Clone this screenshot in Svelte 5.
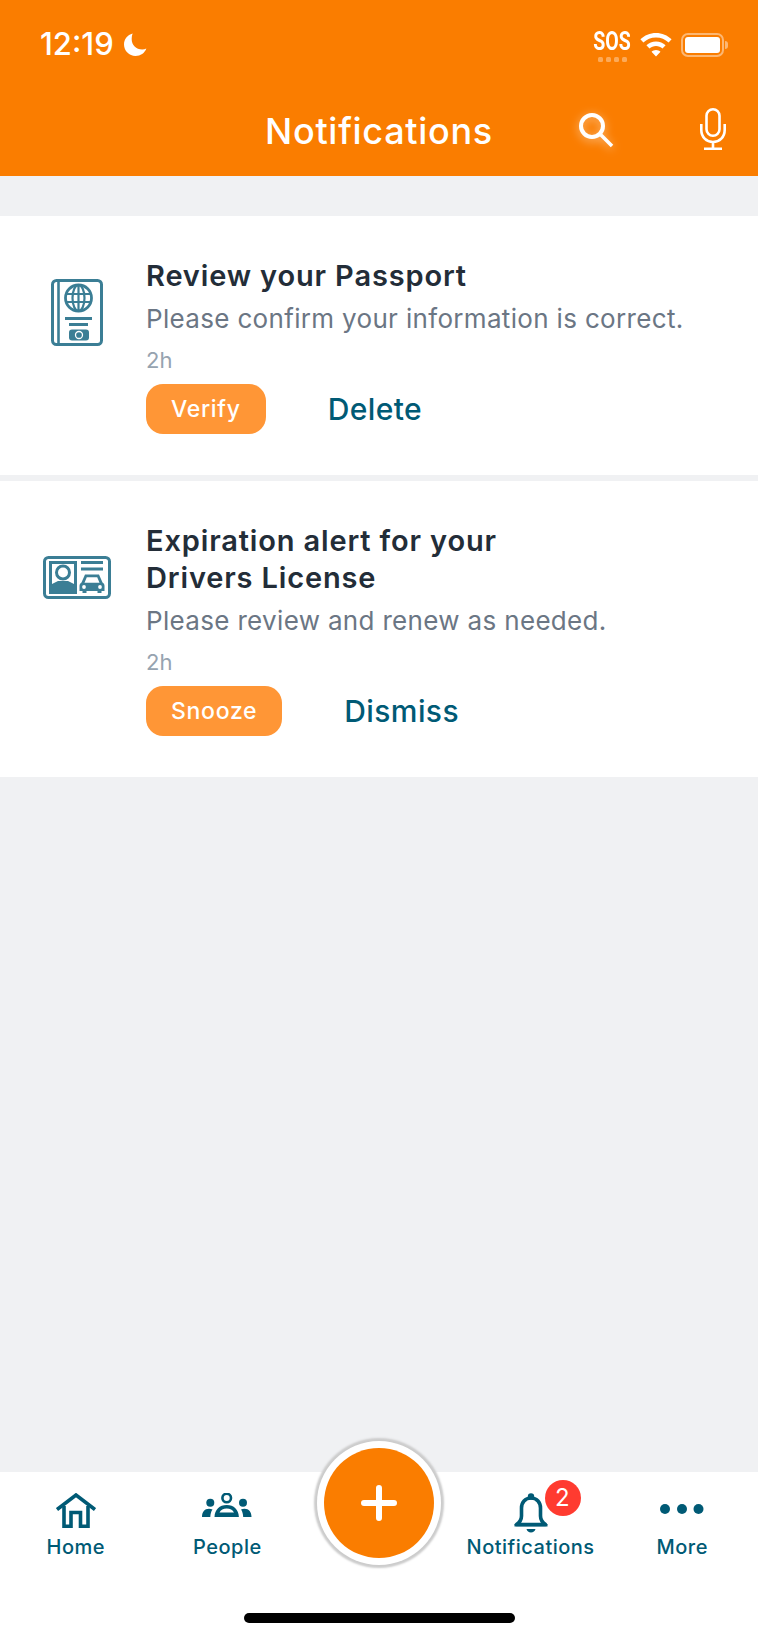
<script>
    const notifications = [
        {
            id: 1,
            icon: "passport",
            title: ["Review your Passport"],
            body: "Please confirm your information is correct.",
            time: "2h",
            action: "Verify",
            secondary: "Delete",
        },
        {
            id: 2,
            icon: "license",
            title: ["Expiration alert for your", "Drivers License"],
            body: "Please review and renew as needed.",
            time: "2h",
            action: "Snooze",
            secondary: "Dismiss",
        },
    ];
</script>

<div class="page">
    <header class="top">
        <div class="status">
            <div class="status-left">
                <span class="clock">12:19</span>
                <svg class="moon" viewBox="0 0 24 24" width="24" height="24">
                    <path fill="#fff" d="M9 .6C3.6 2 0 6.6 0 12c0 6.600 5.400 12 12 12 5.200 0 9.600-3 11.300-7.800-1.200.6-2.700.9-4.300.9C12.700 17.100 8 12.400 8 6.200 8 4.200 8.300 2.300 9 .6z" />
                </svg>
            </div>
            <div class="status-right">
                <div class="sos">
                    <span>SOS</span>
                    <div class="sos-dots"><i></i><i></i><i></i><i></i></div>
                </div>
                <svg class="wifi" viewBox="0 0 32 24" width="32" height="24">
                    <path fill="#fff" d="M16 0C10 0 4.500 2.400.4 6.300l3 3.200C6.700 6.400 11.100 4.500 16 4.500s9.300 1.900 12.600 5l3-3.200C27.500 2.400 22 0 16 0zm0 8.500c-3.700 0-7.100 1.400-9.600 3.800l3.100 3.200c1.700-1.600 4-2.500 6.500-2.500s4.800.9 6.500 2.500l3.100-3.200c-2.500-2.400-5.900-3.800-9.600-3.800zm0 8.500c-1.700 0-3.300.7-4.500 1.800L16 23.500l4.500-4.700C19.300 17.700 17.700 17 16 17z" />
                </svg>
                <div class="battery"><div class="battery-fill"></div></div>
                <div class="battery-cap"></div>
            </div>
        </div>
        <div class="titlebar">
            <h1>Notifications</h1>
            <svg class="search" viewBox="0 0 36 36" width="36" height="36">
                <circle cx="14" cy="14" r="11" fill="none" stroke="#fff" stroke-width="4" />
                <path d="M22 22l12 12" stroke="#fff" stroke-width="3.600" />
            </svg>
            <svg class="mic" viewBox="0 0 26 42" width="26" height="42">
                <rect x="6.500" y="1.300" width="13" height="26.500" rx="6.500" fill="none" stroke="#fff" stroke-width="2.600" />
                <path d="M1.300 16v6c0 7 5.100 12 11.700 12s11.700-5 11.700-12v-6M13 34v6.500M4 40.700h18" fill="none" stroke="#fff" stroke-width="2.600" />
            </svg>
        </div>
    </header>

    <main class="list">
        {#each notifications as item (item.id)}
            <section class="card">
                <div class="card-icon">
                    {#if item.icon === "passport"}
                        <svg class="passport" viewBox="0 0 52 67" width="52" height="67">
                            <rect x="1.500" y="1.500" width="49" height="64" rx="4" fill="none" stroke="#3b7e95" stroke-width="3" />
                            <path d="M7.500 1v65" stroke="#3b7e95" stroke-width="2.600" />
                            <circle cx="27.500" cy="19" r="13" fill="none" stroke="#3b7e95" stroke-width="2.800" />
                            <ellipse cx="27.500" cy="19" rx="6" ry="13" fill="none" stroke="#3b7e95" stroke-width="2.200" />
                            <path d="M27.500 6v26M15.500 15h24M15.500 23h24" stroke="#3b7e95" stroke-width="2.200" />
                            <path d="M14 39.500h27M18 45.500h19" stroke="#3b7e95" stroke-width="2.800" />
                            <rect x="18" y="50.500" width="20" height="11" rx="3" fill="#3b7e95" />
                            <circle cx="28" cy="56" r="3.500" fill="#3b7e95" stroke="#fff" stroke-width="1.300" />
                        </svg>
                    {:else}
                        <svg class="license" viewBox="0 0 68 43" width="68" height="43">
                            <rect x="1.500" y="1.500" width="65" height="40" rx="4" fill="none" stroke="#3b7e95" stroke-width="3" />
                            <path d="M7.500 6.500h25v30h-25z" fill="none" stroke="#3b7e95" stroke-width="3" />
                            <path d="M8 36.500v-8l7-3.500h10l7 3.500v8z" fill="#3b7e95" />
                            <circle cx="20" cy="16.500" r="6.500" fill="#fff" stroke="#3b7e95" stroke-width="3" />
                            <path d="M38 6.500h22M38 13h22" stroke="#3b7e95" stroke-width="3" />
                            <path d="M42 18.500h14l3.500 8c1.500.7 2 2 2 3.500v5h-3v2h-4v-2H43.500v2h-4v-2h-3v-5c0-1.500.6-2.800 2-3.500zM43.800 21.300l-2.300 5.400h15l-2.300-5.400z" fill="#3b7e95" fill-rule="evenodd" />
                            <circle cx="41" cy="31" r="1.900" fill="#fff" />
                            <circle cx="57" cy="31" r="1.900" fill="#fff" />
                        </svg>
                    {/if}
                </div>
                <div class="card-body">
                    <h2>
                        {#each item.title as line}
                            <span>{line}</span>
                        {/each}
                    </h2>
                    <p class="desc">{item.body}</p>
                    <p class="time">{item.time}</p>
                    <div class="actions">
                        <button class="primary">{item.action}</button>
                        <button class="link">{item.secondary}</button>
                    </div>
                </div>
            </section>
        {/each}
    </main>

    <nav class="tabs">
        <div class="tab">
            <svg viewBox="0 0 40 36" width="40" height="36">
                <path d="M1 16.500L20 2l19 14.500" fill="none" stroke="#005a75" stroke-width="3.600" />
                <path d="M8 13v20.200h7V19.500h9.500v13.700H32V13" fill="none" stroke="#005a75" stroke-width="3.600" />
            </svg>
            <span>Home</span>
        </div>
        <div class="tab">
            <svg class="people" viewBox="0 0 50 25" width="50" height="25">
                <circle cx="24.700" cy="5" r="4.300" fill="none" stroke="#005a75" stroke-width="2.600" />
                <circle cx="8.300" cy="9.700" r="4" fill="#005a75" />
                <circle cx="41" cy="9.700" r="4" fill="#005a75" />
                <path d="M12.500 24c.3-7.500 5-12 12.200-12s11.900 4.500 12.200 12zM17.500 19.500h14.500c-1.200-2.500-4-4-7.300-4s-6 1.500-7.200 4z" fill="#005a75" fill-rule="evenodd" />
                <path d="M0 24c0-5 2.500-8.200 7-8.200 1.300 0 2.500.2 3.500.7C9 18.500 8.500 21 8.300 24zM49.500 24c0-5-2.500-8.200-7-8.200-1.300 0-2.500.2-3.500.7 1.500 2 2 4.500 2.200 7.500z" fill="#005a75" />
            </svg>
            <span>People</span>
        </div>
        <div class="tab fab-slot">
            <button class="fab" aria-label="Add">
                <svg viewBox="0 0 36 36" width="36" height="36">
                    <path d="M18 3v30M3 18h30" stroke="#fff" stroke-width="6" stroke-linecap="round" />
                </svg>
            </button>
        </div>
        <div class="tab">
            <div class="bell-wrap">
                <svg viewBox="0 0 34 40" width="34" height="40">
                    <path d="M17 5c-6 0-9.500 4.500-9.500 10v8c0 4-2 6.500-5 8.500h29c-3-2-5-4.500-5-8.500v-8C26.500 9.500 23 5 17 5z" fill="none" stroke="#005a75" stroke-width="3.600" stroke-linejoin="round" />
                    <circle cx="17" cy="3.500" r="3.200" fill="#005a75" />
                    <path d="M0.500 31h33v2.500H0.500zM12.500 36h9c-.5 2-2.300 3.500-4.500 3.500s-4-1.500-4.500-3.500z" fill="#005a75" />
                </svg>
                <div class="badge">2</div>
            </div>
            <span>Notifications</span>
        </div>
        <div class="tab">
            <svg viewBox="0 0 44 10" width="44" height="40">
                <circle cx="5" cy="5" r="5" fill="#005a75" />
                <circle cx="22" cy="5" r="5" fill="#005a75" />
                <circle cx="38.500" cy="5" r="5" fill="#005a75" />
            </svg>
            <span>More</span>
        </div>
    </nav>
    <div class="home-bar"></div>
</div>

<style>
    :global(body) {
        margin: 0;
        background: #f0f1f3;
    }

    .page {
        position: relative;
        width: 758px;
        height: 1638px;
        display: flex;
        flex-direction: column;
        font-family: Inter, "Liberation Sans", sans-serif;
        overflow: hidden;
    }

    .top {
        height: 176px;
        background: #fa7d00;
        color: #fff;
        flex-shrink: 0;
        box-sizing: border-box;
        padding: 26px 32px 0 40px;
    }

    .status {
        display: flex;
        justify-content: space-between;
        height: 75px;
    }

    .status-left {
        display: flex;
        align-items: center;
        gap: 10px;
        height: 36px;
    }

    .clock {
        font-size: 31px;
        font-weight: 500;
        line-height: 36px;
    }

    .moon {
        width: 23px;
        height: 23px;
    }

    .status-right {
        display: flex;
        align-items: flex-start;
        padding-top: 7px;
        margin-right: -2px;
    }

    .sos {
        width: 38px;
        margin-right: 9px;
        display: flex;
        flex-direction: column;
        align-items: center;
    }

    .sos span {
        font-family: Roboto, sans-serif;
        font-weight: 700;
        font-size: 25px;
        line-height: 18px;
        transform: scaleX(0.78);
        white-space: nowrap;
    }

    .sos-dots {
        display: flex;
        gap: 3px;
        margin-top: 6px;
    }

    .sos-dots i {
        width: 5px;
        height: 5px;
        border-radius: 1.500px;
        background: rgba(255, 255, 255, 0.35);
    }

    .wifi {
        margin-right: 9px;
    }

    .battery {
        width: 43px;
        height: 24px;
        box-sizing: border-box;
        border: 2px solid rgba(255, 255, 255, 0.45);
        border-radius: 7px;
        padding: 2px;
    }

    .battery-fill {
        width: 100%;
        height: 100%;
        background: #fff;
        border-radius: 3px;
    }

    .battery-cap {
        width: 3px;
        height: 8px;
        margin: 8px 0 0 1px;
        background: rgba(255, 255, 255, 0.45);
        border-radius: 0 3px 3px 0;
    }

    .titlebar {
        position: relative;
        height: 60px;
        display: flex;
        justify-content: center;
    }

    .titlebar h1 {
        margin: 0 8px 0 0;
        font-size: 36px;
        font-weight: 500;
        letter-spacing: 0.7px;
        line-height: 60px;
    }

    .search {
        position: absolute;
        left: 538px;
        top: 11px;
        filter: drop-shadow(0 2px 5px rgba(255, 255, 255, 0.55));
    }

    .mic {
        position: absolute;
        left: 660px;
        top: 7px;
    }

    .list {
        flex: 1;
        display: flex;
        flex-direction: column;
        gap: 6px;
        padding-top: 40px;
        background: #f0f1f3;
    }

    .card {
        background: #fff;
        display: flex;
        padding: 41px 0 41px;
    }

    .card-icon {
        width: 146px;
        flex-shrink: 0;
        display: flex;
        justify-content: center;
        padding-left: 8px;
        box-sizing: border-box;
    }

    .passport {
        margin-top: 22px;
    }

    .license {
        margin-top: 34px;
    }

    .card-body {
        flex: 1;
    }

    h2 {
        margin: 0;
        font-size: 29px;
        font-weight: 600;
        letter-spacing: 0.85px;
        line-height: 37px;
        color: #232d38;
    }

    h2 span {
        display: block;
    }

    .desc {
        margin: 6px 0 0;
        font-size: 26px;
        letter-spacing: 0.33px;
        line-height: 38px;
        color: #6b7684;
    }

    .time {
        margin: 7px 0 0;
        font-size: 22px;
        line-height: 30px;
        color: #96a3b0;
    }

    .actions {
        display: flex;
        align-items: center;
        margin-top: 9px;
    }

    button {
        font-family: inherit;
        border: none;
        padding: 0;
        background: none;
    }

    .primary {
        height: 50px;
        padding: 0 25px;
        background: #ff9636;
        color: #fff;
        border-radius: 17px;
        font-size: 23px;
        font-weight: 500;
        letter-spacing: 0.7px;
    }

    .link {
        margin-left: 62px;
        color: #005a75;
        font-size: 30px;
        font-weight: 500;
        letter-spacing: 0.4px;
    }

    .tabs {
        height: 166px;
        flex-shrink: 0;
        background: #fff;
        display: grid;
        grid-template-columns: repeat(5, 1fr);
        box-sizing: border-box;
        padding-top: 18px;
    }

    .tab {
        display: flex;
        flex-direction: column;
        align-items: center;
        color: #005a75;
        font-size: 20px;
        font-weight: 500;
        letter-spacing: 0.5px;
        height: 70px;
        justify-content: flex-end;
    }

    .tab > svg {
        flex-shrink: 0;
        margin-bottom: 5px;
    }

    .tab > svg.people {
        margin-bottom: 16px;
    }

    .tab span {
        line-height: 26px;
        white-space: nowrap;
    }

    .fab-slot {
        position: relative;
    }

    .fab {
        position: absolute;
        left: 50%;
        top: -42px;
        transform: translateX(-50%);
        width: 110px;
        height: 110px;
        border-radius: 50%;
        background: #fa7d00;
        display: flex;
        align-items: center;
        justify-content: center;
        box-shadow: 0 0 0 7px #fff, 0 0 2px 10px #ccc;
    }

    .bell-wrap {
        position: relative;
        height: 40px;
        margin-bottom: 1px;
    }

    .badge {
        position: absolute;
        left: 31px;
        top: -13px;
        width: 36px;
        height: 36px;
        border-radius: 50%;
        background: #ff3b30;
        color: #fff;
        font-size: 24px;
        font-weight: 400;
        line-height: 36px;
        text-align: center;
    }

    .home-bar {
        position: absolute;
        left: 244px;
        bottom: 15px;
        width: 271px;
        height: 10px;
        border-radius: 5px;
        background: #000;
    }
</style>
